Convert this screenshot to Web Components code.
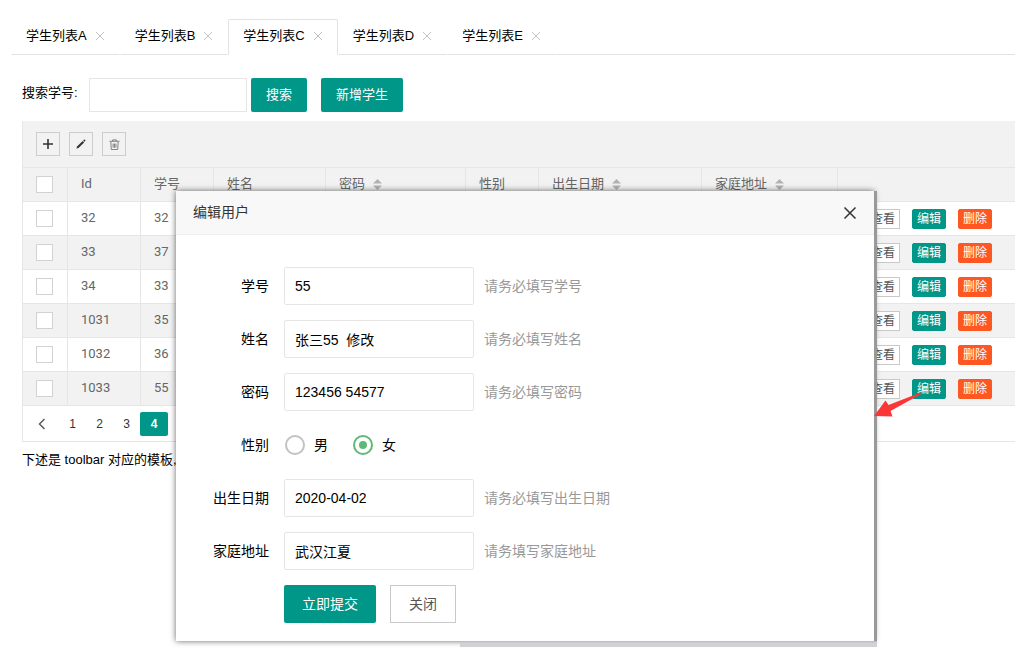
<!DOCTYPE html>
<html lang="zh-CN">
<head>
<meta charset="utf-8">
<title>学生列表</title>
<style>
  html, body { margin: 0; min-height: 100%; background: #fff; }
  body { font: 13px/20px "Liberation Sans", "Noto Sans CJK SC", sans-serif; color: #000; overflow: hidden; }
</style>
</head>
<body>
<student-page></student-page>
<script>
const define = (name, html) => customElements.define(name, class extends HTMLElement {
  connectedCallback() {
    if (this.shadowRoot) return;
    const root = this.attachShadow({ mode: 'open' });
    const tpl = document.createElement('template');
    tpl.innerHTML = typeof html === 'function' ? html(this) : html;
    root.append(tpl.content.cloneNode(true));
  }
});

define('tab-item', `
  <style>
    :host { display: flex; align-items: center; gap: 8px; box-sizing: border-box; height: 36px; padding: 0 14px 2px;
      border: 1px solid transparent; border-bottom-color: #e2e2e2; white-space: nowrap; }
    :host([active]) { border-color: #e2e2e2; border-bottom-color: #fff; border-radius: 2px 2px 0 0; }
    a { color: inherit; text-decoration: none; }
    button { display: flex; border: 0; padding: 0; background: none; color: #c2c2c2; }
  </style>
  <a href="#"><slot></slot></a>
  <button type="button" aria-label="关闭标签"><svg width="10" height="10" viewBox="0 0 10 10" fill="none" stroke="currentColor"><path d="M1 1l8 8M9 1L1 9"/></svg></button>`);

define('tab-bar', `
  <style>
    :host { display: flex; }
    ::slotted(*) { margin-right: 0; }
    .rest { flex: 1; border-bottom: 1px solid #e2e2e2; }
  </style>
  <slot></slot><div class="rest"></div>`);

define('ui-button', `
  <style>
    :host { display: block; }
    button { display: block; font: inherit; height: 34px; padding: 0 15px; border: 0; border-radius: 2px;
      background: #009688; color: #fff; white-space: nowrap; }
    :host([size=form]) button { font-size: 14px; height: 38px; padding: 0 18px; }
    :host([size=mini]) button { font-size: 12px; line-height: 18px; height: 20px; padding: 0 4px; border: 1px solid #009688; }
    :host([kind=plain]) button { background: #fff; color: #555; border: 1px solid #c9c9c9; border-radius: 0; }
    :host([size][kind=danger]) button { background: #ff5722; border-color: #ff5722; }
    :host([size][kind=plain]) button { border-color: #c9c9c9; }
  </style>
  <button type="button"><slot></slot></button>`);

define('search-bar', `
  <style>
    :host { display: flex; align-items: center; padding-left: 11px; }
    label { width: 67px; margin-bottom: 4px; white-space: nowrap; }
    input { box-sizing: border-box; width: 158px; height: 34px; margin-right: 4px; padding: 0 10px; border: 1px solid #e6e6e6;
      border-radius: 0; font: inherit; }
    ui-button + ui-button { margin-left: 14px; }
  </style>
  <label for="q">搜索学号:</label><input id="q" type="text">
  <ui-button>搜索</ui-button><ui-button>新增学生</ui-button>`);

define('table-toolbar', `
  <style>
    :host { display: flex; align-items: center; gap: 9px; height: 46px; padding-left: 13px; background: #f2f2f2; border-bottom: 1px solid #e6e6e6; }
    button { display: flex; align-items: center; justify-content: center; width: 24px; height: 24px; padding: 0;
      border: 1px solid #ccc; background: none; color: #333; }
  </style>
  <button type="button" aria-label="添加"><svg width="10" height="10" viewBox="0 0 10 10" stroke="currentColor" stroke-width="1.6" fill="none"><path d="M5 0v10M0 5h10"/></svg></button>
  <button type="button" aria-label="编辑"><svg width="10" height="10" viewBox="0 0 12 12" fill="currentColor"><path d="M.5 11.500l.7-2.600 6.800-6.600 1.800 1.800-6.800 6.600zM8.600 1.700l1-.9q.6-.4 1.100.1l.5.5q.4.6-.1 1.100l-.8.8z"/></svg></button>
  <button type="button" aria-label="删除"><svg width="11" height="11" viewBox="0 0 12 12" fill="none" stroke="#777"><path d="M.5 2.5h11M4 2.5V1h4v1.5M2 3l.5 8.500h7L10 3M4.500 5v4.500M6 5v4.500M7.500 5v4.500"/></svg></button>`);

define('sort-mark', `
  <style>:host { display: inline-block; margin-left: 8px; vertical-align: -2px; } svg { display: block; }</style>
  <svg width="9" height="11" viewBox="0 0 9 11" fill="#b2b2b2"><path d="M4.500 0L9 4.500H0zM0 6.500h9L4.500 11z"/></svg>`);

const rows = [['32', '32'], ['33', '37'], ['34', '33'], ['1031', '35'], ['1032', '36'], ['1033', '55']];
define('student-table', () => `
  <style>
    :host { display: block; font-family: Roboto, "Noto Sans CJK SC", sans-serif; }
    table { width: 100%; table-layout: fixed; border-collapse: separate; border-spacing: 0; color: #666; }
    th, td { box-sizing: border-box; height: 34px; padding: 0 13px 2px; border: 0 solid #e6e6e6; border-width: 0 1px 1px 0;
      font-weight: 400; text-align: left; white-space: nowrap; }
    th:first-child, td:first-child { padding: 0 0 0 13px; }
    th:last-child, td:last-child { border-right: 0; }
    td:last-child { padding: 0 0 0 28px; }
    thead tr, tbody tr:nth-child(even) { background: #f2f2f2; }
    input { display: block; appearance: none; box-sizing: border-box; width: 17px; height: 17px; margin: 0; border: 1px solid #d2d2d2; background: #fff; }
    .ops { display: flex; gap: 12px; }
    .c0 { width: 45px } .c1 { width: 73px } .c2 { width: 112px } .c3 { width: 140px } .c4 { width: 163px } .c5 { width: 136px }
  </style>
  <table>
    <colgroup><col class="c0"><col class="c1"><col class="c1"><col class="c2"><col class="c3"><col class="c1"><col class="c4"><col class="c5"><col></colgroup>
    <thead><tr><th><input type="checkbox" aria-label="全选"></th><th>Id</th><th>学号</th><th>姓名</th><th>密码<sort-mark></sort-mark></th><th>性别</th><th>出生日期<sort-mark></sort-mark></th><th>家庭地址<sort-mark></sort-mark></th><th></th></tr></thead>
    <tbody>${rows.map(([id, no]) => `<tr><td><input type="checkbox" aria-label="选择 ${id}"></td><td>${id}</td><td>${no}</td><td></td><td></td><td></td><td></td><td></td>
      <td><div class="ops"><ui-button size="mini" kind="plain">查看</ui-button><ui-button size="mini">编辑</ui-button><ui-button size="mini" kind="danger">删除</ui-button></div></td></tr>`).join('')}</tbody>
  </table>`);

define('page-nav', `
  <style>
    :host { display: flex; align-items: center; height: 35px; padding-left: 5px; border-bottom: 1px solid #e6e6e6; font-size: 12px; }
    a { display: flex; align-items: center; justify-content: center; width: 27px; height: 24px; color: #333; text-decoration: none; }
    .prev { margin-right: 4px; }
    .on { width: 28px; background: #009688; color: #fff; border-radius: 2px; font-weight: 700; }
  </style>
  <a href="#" class="prev" aria-label="上一页"><svg width="8" height="12" viewBox="0 0 8 12" fill="none" stroke="#555" stroke-width="1.4"><path d="M6.500 1L1.500 6l5 5"/></svg></a>
  <a href="#">1</a><a href="#">2</a><a href="#">3</a><a href="#" class="on">4</a>`);

define('form-row', el => `
  <style>
    :host { display: flex; align-items: center; height: 38px; font-size: 14px; }
    label { box-sizing: border-box; width: 108px; padding-right: 15px; text-align: right; }
    input { box-sizing: border-box; width: 190px; height: 38px; padding: 0 10px; border: 1px solid #e6e6e6; border-radius: 2px; background: #fff; font: inherit; color: #000; }
    .hint { margin-left: 10px; color: #999; }
  </style>
  <label for="f">${el.getAttribute('label')}</label><input id="f" type="text" value="${el.getAttribute('value')}">
  <span class="hint"><slot></slot></span>`);

define('gender-row', `
  <style>
    :host { display: flex; align-items: center; height: 38px; font-size: 14px; }
    .name { box-sizing: border-box; width: 108px; padding-right: 15px; text-align: right; }
    label { display: flex; align-items: center; gap: 9px; margin-right: 24px; padding-left: 1px; }
    input { appearance: none; box-sizing: border-box; display: grid; place-items: center; width: 20px; height: 20px; margin: 0; border: 2px solid #c2c2c2; border-radius: 50%; }
    input:checked { border-color: #5fb878; }
    input:checked::before { content: ""; width: 8px; height: 8px; border-radius: 50%; background: #5fb878; }
  </style>
  <span class="name">性别</span>
  <label><input type="radio" name="g">男</label><label><input type="radio" name="g" checked>女</label>`);

define('edit-dialog', `
  <style>
    :host { display: block; position: absolute; top: 191px; left: 176px; right: 141px; background: #fff;
      box-shadow: 3px 0 0 #999, 0 0 6px rgba(0,0,0,.6); }
    :host::after { content: ""; position: absolute; left: 284px; right: -3px; top: 100%; height: 6px; background: linear-gradient(#b8b8bc, #d2d2d6 2px); }
    header { display: flex; align-items: center; justify-content: space-between; height: 43px; padding: 0 17px;
      background: #f8f8f8; border-bottom: 1px solid #eee; font-size: 14px; color: #333; }
    header span { padding-bottom: 2px; }
    header button { display: flex; padding: 0; border: 0; background: none; color: #333; }
    form { display: grid; gap: 15px; padding: 32px 0 18px; }
    .actions { display: flex; gap: 14px; padding-left: 108px; }
  </style>
  <header><span>编辑用户</span><button type="button" aria-label="关闭"><svg width="14" height="14" viewBox="0 0 14 14" fill="none" stroke="currentColor" stroke-width="1.5"><path d="M1.500 1.500l11 11M12.500 1.500l-11 11"/></svg></button></header>
  <form>
    <form-row label="学号" value="55">请务必填写学号</form-row>
    <form-row label="姓名" value="张三55&nbsp; 修改">请务必填写姓名</form-row>
    <form-row label="密码" value="123456 54577">请务必填写密码</form-row>
    <gender-row></gender-row>
    <form-row label="出生日期" value="2020-04-02">请务必填写出生日期</form-row>
    <form-row label="家庭地址" value="武汉江夏">请务填写家庭地址</form-row>
    <div class="actions"><ui-button size="form">立即提交</ui-button><ui-button size="form" kind="plain">关闭</ui-button></div>
  </form>`);

define('pointer-arrow', `
  <style>:host { display: block; position: absolute; top: 391px; left: 874px; pointer-events: none; } svg { display: block; }</style>
  <svg width="50" height="28" viewBox="0 0 50 28" fill="#fb3636"><path d="M0 25L11.500 9.500l3 4.500L48 1v1.500L16.500 20l2 5.500z"/></svg>`);

define('student-page', `
  <style>
    :host { display: block; padding: 19px 0 0 11px; }
    search-bar { margin: 23px 0 9px; }
    .grid { margin-left: 11px; border: 1px solid #e6e6e6; border-width: 0 0 0 1px; }
    p { margin: 8px 0 0 11px; }
  </style>
  <tab-bar><tab-item>学生列表A</tab-item><tab-item>学生列表B</tab-item><tab-item active>学生列表C</tab-item><tab-item>学生列表D</tab-item><tab-item>学生列表E</tab-item></tab-bar>
  <search-bar></search-bar>
  <div class="grid"><table-toolbar></table-toolbar><student-table></student-table><page-nav></page-nav></div>
  <p>下述是 toolbar 对应的模板,</p>
  <edit-dialog></edit-dialog>
  <pointer-arrow></pointer-arrow>`);
</script>
</body>
</html>
